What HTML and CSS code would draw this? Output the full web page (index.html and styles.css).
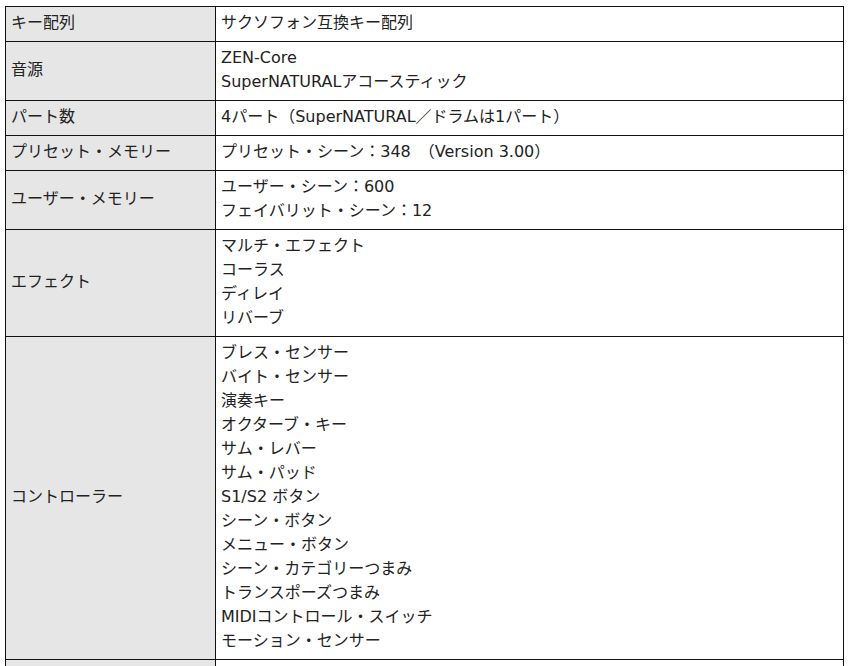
FILE: index.html
```html
<!DOCTYPE html>
<html lang="ja">
<head>
<meta charset="utf-8">
<link rel="stylesheet" href="styles.css">
</head>
<body>
<table class="spec">
<tr><th>キー配列</th><td>サクソフォン互換キー配列</td></tr>
<tr><th>音源</th><td>ZEN-Core<br>SuperNATURALアコースティック</td></tr>
<tr><th>パート数</th><td>4パート（SuperNATURAL／ドラムは1パート）</td></tr>
<tr><th>プリセット・メモリー</th><td>プリセット・シーン：348　（Version 3.00）</td></tr>
<tr><th>ユーザー・メモリー</th><td>ユーザー・シーン：600<br>フェイバリット・シーン：12</td></tr>
<tr><th>エフェクト</th><td>マルチ・エフェクト<br>コーラス<br>ディレイ<br>リバーブ</td></tr>
<tr><th>コントローラー</th><td>ブレス・センサー<br>バイト・センサー<br>演奏キー<br>オクターブ・キー<br>サム・レバー<br>サム・パッド<br>S1/S2 ボタン<br>シーン・ボタン<br>メニュー・ボタン<br>シーン・カテゴリーつまみ<br>トランスポーズつまみ<br>MIDIコントロール・スイッチ<br>モーション・センサー</td></tr>
<tr><th>&nbsp;</th><td>&nbsp;</td></tr>
</table>
</body>
</html>
```
FILE: styles.css
```css
html, body {
  margin: 0;
  padding: 0;
  background: #fff;
}
body {
  padding: 6px 0 0 5px;
  font-family: "DejaVu Sans", "Noto Sans CJK JP", sans-serif;
  font-size: 16px;
  line-height: 24px;
  color: #222;
}
.spec {
  border-collapse: collapse;
  width: 839px;
}
.spec th, .spec td {
  border: 1px solid #111;
  padding: 4px 5px 6px;
  text-align: left;
  vertical-align: middle;
  font-weight: normal;
}
.spec th {
  width: 199px;
  background: #e6e6e6;
}
.spec td {
  background: #fff;
}
```
